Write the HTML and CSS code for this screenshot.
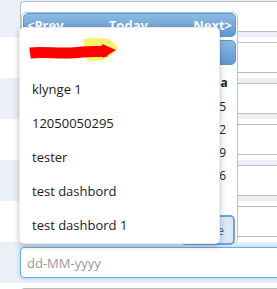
FILE: index.html
```html
<!DOCTYPE html>
<html lang="en">
<head>
  <meta charset="UTF-8">
  <meta name="viewport" content="width=device-width, initial-scale=1.0">
  <title>Dashboard filter</title>
  <link rel="stylesheet" href="styles.css">
</head>
<body>
    <div class="form-table">
        <div class="form-row"><input class="field" type="text"></div>
        <div class="form-row"><input class="field" type="text"></div>
        <div class="form-row"><input class="field" type="text"></div>
        <div class="form-row"><input class="field" type="text"></div>
        <div class="form-row"><input class="field" type="text"></div>
        <div class="form-row"><input class="field" type="text"></div>
        <div class="form-row"><input class="field focused" type="text" placeholder="dd-MM-yyyy"></div>
        <div class="form-row"><input class="field" type="text"></div>
    </div>

    <!-- Datepicker popup (most of it sits under the dropdown) -->
    <div class="datepicker">
        <div class="dp-bar">
            <span>&lt;Prev</span>
            <span>Today</span>
            <span>Next&gt;</span>
        </div>
        <div class="dp-bar dp-title"></div>
        <table class="dp-calendar">
            <tr><th></th><th></th><th></th><th></th><th></th><th></th><th>Sa</th></tr>
            <tr><td></td><td></td><td></td><td></td><td></td><td></td><td>5</td></tr>
            <tr><td></td><td></td><td></td><td></td><td></td><td></td><td>12</td></tr>
            <tr><td></td><td></td><td></td><td></td><td></td><td></td><td>19</td></tr>
            <tr><td></td><td></td><td></td><td></td><td></td><td></td><td>26</td></tr>
            <tr><td></td><td></td><td></td><td></td><td></td><td></td><td></td></tr>
        </table>
        <div class="dp-buttons">
            <button class="dp-close">Close</button>
        </div>
    </div>

    <!-- Dashboard dropdown -->
    <ul class="menu">
        <li class="menu-item">
            <svg class="scribble" width="92" height="26" viewBox="0 0 92 26">
                <path d="M56,1 Q70,-1 80,1 Q89,5 91,10 Q86,17 78,21 Q70,24 60,23 Z" fill="#f6f36a"/>
                <path d="M3,15 C18,13 36,17 55,14 C65,13 72,14 80,13" stroke="#ff0000" stroke-width="11" fill="none"/>
                <path d="M75,6 L89,12 L76,20 Z" fill="#ff0000"/>
            </svg>
        </li>
        <li class="menu-item">klynge 1</li>
        <li class="menu-item">12050050295</li>
        <li class="menu-item">tester</li>
        <li class="menu-item">test dashbord</li>
        <li class="menu-item">test dashbord 1</li>
    </ul>
</body>
</html>
```

FILE: styles.css
```css
body {
    margin: 0;
    font-family: 'Open Sans', sans-serif;
    font-size: 13px;
    color: #333;
    background: #fff;
    overflow: hidden;
}

.form-table {
    margin-top: -4px;
}

.form-row {
    height: 41px;
    box-sizing: border-box;
    padding: 5px 0 5px 20px;
    background: #fff;
}

.form-row:nth-child(odd) {
    background: #ebf0f7;
}

.field {
    display: block;
    width: 320px;
    height: 31px;
    box-sizing: border-box;
    border: 1px solid #bbb;
    border-radius: 4px;
    padding: 0 6px;
    font-family: 'Open Sans', sans-serif;
    font-size: 13px;
    background: #fff;
    outline: none;
}

.field.focused {
    border-color: #66afe9;
    box-shadow: 0 0 4px rgba(102, 175, 233, 0.6);
}

.field::placeholder {
    color: #9a9a9a;
}

/* Datepicker */
.datepicker {
    position: absolute;
    left: 21px;
    top: 12px;
    width: 217px;
    height: 232px;
    box-sizing: border-box;
    padding: 0 1px;
    border: 1px solid #a6c9e2;
    border-radius: 5px;
    background: #fff;
}

.dp-bar {
    height: 24px;
    box-sizing: border-box;
    display: flex;
    justify-content: space-between;
    align-items: center;
    padding: 0 3px;
    border: 1px solid #5a98d2;
    border-radius: 5px;
    background: linear-gradient(#8dbae3, #5f98d0);
    color: #fff;
    font-weight: bold;
    font-size: 13px;
}

.dp-title {
    height: 25px;
    margin-top: 3px;
}

.dp-calendar {
    width: 100%;
    table-layout: fixed;
    border-collapse: collapse;
    margin-top: 4px;
    font-size: 12px;
    color: #222;
}

.dp-calendar th {
    height: 24px;
    font-weight: bold;
    text-align: center;
}

.dp-calendar td {
    height: 23px;
    text-align: right;
    padding: 0 10px 0 0;
}

.dp-buttons {
    display: flex;
    justify-content: flex-end;
    padding-top: 5px;
}

.dp-close {
    height: 30px;
    padding: 0 9px;
    margin-right: 1px;
    border: 2px solid #6aa4da;
    border-radius: 5px;
    background: #d9e9f8;
    color: #2e6e9e;
    font-family: 'Open Sans', sans-serif;
    font-size: 13px;
}

/* Dropdown menu */
.menu {
    position: absolute;
    left: 19px;
    top: 27px;
    width: 201px;
    height: 217px;
    box-sizing: border-box;
    margin: 0;
    padding: 7px 0 6px;
    list-style: none;
    background: #fff;
    border: 1px solid rgba(0, 0, 0, 0.08);
    border-radius: 5px;
    box-shadow: 0 2px 6px rgba(0, 0, 0, 0.25);
}

.menu-item {
    height: 34px;
    line-height: 34px;
    padding-left: 12px;
    color: #222;
    white-space: nowrap;
}

.scribble {
    display: block;
    margin: 3px 0 0 -5px;
}
```
